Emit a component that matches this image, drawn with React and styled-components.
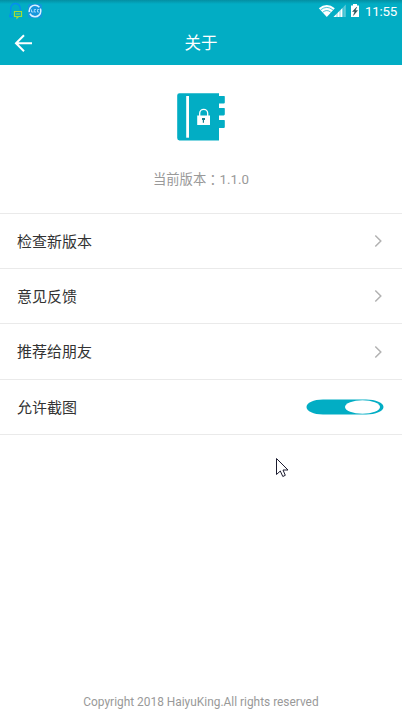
import React from "react";
import styled, { createGlobalStyle } from "styled-components";

const TEAL = "#02adc4";

const GlobalStyle = createGlobalStyle`
  * { box-sizing: border-box; }
  html, body { margin: 0; background: #fff; }
  body { font-family: Roboto, "Noto Sans CJK SC", sans-serif; overflow: hidden; }
  svg { display: block; }
`;

const Screen = styled.div`
  position: relative;
  display: flex;
  flex-direction: column;
  width: 402px;
  height: 716px;
  background: #fff;
`;

const Header = styled.header`
  height: 65px;
  background: linear-gradient(#048fa2 0, ${TEAL} 4px);
  color: #fff;
`;

const StatusBar = styled.div`
  display: flex;
  justify-content: space-between;
  height: 22px;
  padding: 0 5px 0 8px;
`;

const StatusGroup = styled.div`
  display: flex;
  height: 22px;
`;

const Clock = styled.span`
  width: 33px;
  padding-left: 1px;
  font-size: 13.3px;
  letter-spacing: -0.2px;
  line-height: 23px;
  white-space: nowrap;
`;

const TitleBar = styled.div`
  display: grid;
  grid-template-columns: 48px 1fr 48px;
  align-items: center;
  height: 43px;
`;

const BackButton = styled.button`
  width: 48px;
  height: 43px;
  padding: 0;
  border: 0;
  background: none;
  color: #fff;
`;

const Title = styled.h1`
  margin: 0;
  text-align: center;
  font-size: 16.5px;
  line-height: 43px;
  font-weight: 400;
`;

const About = styled.section`
  display: flex;
  flex-direction: column;
  align-items: center;
  height: 148px;
  padding-top: 27px;
`;

const Version = styled.p`
  display: flex;
  margin: 28px 0 0;
  font-size: 13.3px;
  line-height: 20px;
  color: #999;
`;

const Colon = styled.span`
  font-family: "Noto Sans CJK TC", sans-serif;
`;

const List = styled.ul`
  margin: 0;
  padding: 0;
  list-style: none;
  border-bottom: 1px solid #eaeaea;
`;

const Row = styled.li`
  display: flex;
  align-items: center;
  justify-content: space-between;
  height: ${(p) => p.$height}px;
  padding: 0 ${(p) => p.$end}px 0 17px;
  border-top: 1px solid #eaeaea;
  font-size: 15px;
  line-height: 22px;
  color: #333;
`;

const Label = styled.span`
  margin-top: 1px;
`;

const Footer = styled.footer`
  margin-top: auto;
  height: 28px;
  text-align: center;
  font-size: 11.9px;
  line-height: 28px;
  color: #999;
`;

const Pointer = styled.svg`
  position: absolute;
  left: 275px;
  top: 457px;
`;

const NotificationIcons = () => (
  <svg width="38" height="22" viewBox="0 0 38 22" fill="none">
    <path d="M5 16.500H1.800C1.800 14 3.200 13.500 2.700 11 2 6.500 4 3.500 7.500 3.500s5 3 5 7" stroke="#068df0" strokeWidth="1.300" />
    <path d="M6.500 11.500h7v5h-3l-1.500 1.500v-1.500H6.500z" stroke="#a8dc32" strokeWidth="1.200" />
    <path d="M8 14h4" stroke="#a1d73c" />
    <rect x="20" y="4" width="14" height="14" rx="2" fill="#1596dc" />
    <circle cx="27" cy="11" r="5.800" stroke="#d9f1ff" strokeWidth="1.500" strokeDasharray="15 1.500" />
    <path d="M23.500 9.500V12h2M28 9.500h-1.700V12H28M31 9.500h-1.500V12H31" stroke="#b8e5ff" strokeWidth=".8" />
  </svg>
);

const DeviceIcons = () => (
  <svg width="46" height="22" viewBox="318 0 46 22">
    <path d="M318.800 8.200Q326.800 1.600 334.800 8.200L326.800 17z" fill="#fff" />
    <path d="M320.700 9.800Q326.800 5 332.900 9.800M322.900 12.100Q326.800 9 330.700 12.100" fill="none" stroke={TEAL} strokeWidth=".7" />
    <path d="M345.800 4.500V17H333.500z" fill="#fff" opacity=".35" />
    <path d="M342.500 8V17H333.500z" fill="#fff" />
    <path d="M337 4v14M340 4v14M343 4v14" stroke={TEAL} strokeWidth=".5" />
    <path d="M353 4h4v1.500h2V17h-8V5.500h2z" fill="#fff" />
    <path d="M356.800 7l-4.300 4.500h2.300l-1.400 4 4.200-5h-2.300z" fill="#234e56" stroke="#234e56" strokeWidth=".4" />
  </svg>
);

const BackArrow = () => (
  <svg width="48" height="43" viewBox="0 22 48 43" fill="none" stroke="#fff" strokeWidth="2">
    <path d="M24 35.2L16 43.2l8 8M16 43.2h16" />
  </svg>
);

const BookLogo = () => (
  <svg width="50" height="50" viewBox="176 92 50 50">
    <path
      d="M179.500 93.200H219V96h5.200q.6 0 .6.600v5.800q0 1.100-1.100 1.100H219v4.500h5.200q.6 0 .6.600v5.700q0 1.100-1.100 1.100H219v4.500h5.200q.6 0 .6.600v6.400q0 1.100-1.100 1.100H219v12.400h-39.500q-2.300 0-2.300-2.300V95.500q0-2.300 2.300-2.300z"
      fill={TEAL}
    />
    <path d="M186.200 96h2.800v41.700h-2.800z" fill="#fff" />
    <path d="M199.700 116v-2.700a4 4 0 0 1 8 0v2.700" fill="none" stroke="#fff" strokeWidth="1.300" />
    <path d="M197.200 115.500h12.800v9.500h-12.800z" fill="#fff" />
    <path d="M202 118h3v2h-1v2.700h-1.200V120H202z" fill="#167e8c" />
  </svg>
);

const Chevron = () => (
  <svg width="9" height="14" viewBox="0 0 9 14" fill="none" stroke="#b2b2b2" strokeWidth="1.5">
    <path d="M1.3 1.5L6.8 7l-5.5 5.5" />
  </svg>
);

const Toggle = () => (
  <svg width="78" height="16" viewBox="0 0 78 16" role="switch" aria-checked="true">
    <path d="M17 .5h43c9.500 0 17.500 3.400 17.500 7.500s-8 7.500-17.500 7.500H17C7.500 15.500 .5 12.100 .5 8S7.500 .5 17 .5z" fill={TEAL} />
    <ellipse cx="56.500" cy="8" rx="17.500" ry="6.700" fill="#fff" />
  </svg>
);

const links = [
  { label: "检查新版本", height: 55 },
  { label: "意见反馈", height: 55 },
  { label: "推荐给朋友", height: 56 },
];

export default function App() {
  return (
    <>
      <GlobalStyle />
      <Screen>
        <Header>
          <StatusBar>
            <StatusGroup><NotificationIcons /></StatusGroup>
            <StatusGroup>
              <DeviceIcons />
              <Clock>11:55</Clock>
            </StatusGroup>
          </StatusBar>
          <TitleBar>
            <BackButton aria-label="返回"><BackArrow /></BackButton>
            <Title>关于</Title>
          </TitleBar>
        </Header>
        <About>
          <BookLogo />
          <Version>当前版本<Colon lang="zh-TW">：</Colon>1.1.0</Version>
        </About>
        <List>
          {links.map(({ label, height }) => (
            <Row key={label} $height={height} $end={19}>
              <Label>{label}</Label>
              <Chevron />
            </Row>
          ))}
          <Row $height={55} $end={18}>
            <Label>允许截图</Label>
            <Toggle />
          </Row>
        </List>
        <Footer>Copyright 2018 HaiyuKing.All rights reserved</Footer>
        <Pointer width="16" height="22" viewBox="0 0 16 22">
          <path d="M1.500 1.500V17.500L5.300 14l2.500 5.500 2.500-1.200L8 13h5z" fill="#fff" stroke="#1c1c30" />
        </Pointer>
      </Screen>
    </>
  );
}
